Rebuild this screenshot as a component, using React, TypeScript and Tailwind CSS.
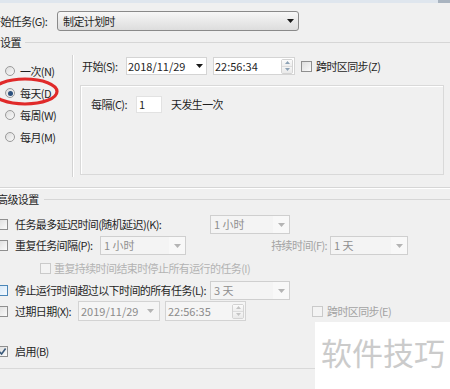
const txt = 'text-[11px] leading-none whitespace-nowrap text-[#1f1f1f] tracking-[-0.6px]'
const num = 'text-[11px] leading-none whitespace-nowrap text-[#1f1f1f]'
const dim = 'text-[11px] leading-none whitespace-nowrap text-[#a3a3a3] tracking-[-0.6px]'

function Arrow({ light }: { light?: boolean }) {
  return (
    <svg width="7" height="4" viewBox="0 0 7 4">
      <polygon points="0,0 7,0 3.5,4" fill={light ? '#b4b4b4' : '#1a1a1a'} />
    </svg>
  )
}

function Spin({ light }: { light?: boolean }) {
  const c = light ? '#c4c4c4' : '#8da2b5'
  return (
    <div className="ml-auto mr-[1px] flex h-[15px] w-[12px] flex-col rounded-[2px] border border-[#d3d3d3]">
      <div className="flex flex-1 items-center justify-center border-b border-[#dcdcdc] bg-gradient-to-b from-[#fbfbfb] to-[#eeeeee]">
        <svg width="5" height="3" viewBox="0 0 5 3"><polygon points="0,3 5,3 2.5,0" fill={c} /></svg>
      </div>
      <div className="flex flex-1 items-center justify-center bg-gradient-to-b from-[#f5f5f5] to-[#e9e9e9]">
        <svg width="5" height="3" viewBox="0 0 5 3"><polygon points="0,0 5,0 2.5,3" fill={c} /></svg>
      </div>
    </div>
  )
}

function Check({ kind = 'normal', checked }: { kind?: 'normal' | 'dim' | 'focus'; checked?: boolean }) {
  const box =
    kind === 'dim'
      ? 'border-[#cacaca] bg-[#f3f3f3]'
      : kind === 'focus'
        ? 'border-[#4a86b8] bg-gradient-to-br from-[#d6e8f8] to-[#f4f9fe]'
        : 'border-[#8f8f8f] bg-gradient-to-br from-[#dedede] to-[#fbfbfb]'
  return (
    <div className={`flex h-[11px] w-[11px] shrink-0 items-center justify-center border ${box}`}>
      {checked && (
        <svg width="9" height="9" viewBox="0 0 9 9">
          <path d="M1.5 4.8 L3.6 7 L7.6 1.5" stroke="#3b5a7a" strokeWidth="1.6" fill="none" />
        </svg>
      )}
    </div>
  )
}

function Radio({ on, label }: { on?: boolean; label: string }) {
  return (
    <div className="flex h-[22px] items-center">
      <div className="ml-[5px] flex h-[10px] w-[10px] items-center justify-center rounded-full border border-[#9a9a9a] bg-gradient-to-br from-[#dcdcdc] to-[#fafafa]">
        {on && <div className="h-[5px] w-[5px] rounded-full bg-[#2a4f7c]" />}
      </div>
      <span className={`${txt} ml-[5px]`}>{label}</span>
    </div>
  )
}

function Combo({ w, text, ml }: { w: string; text: string; ml?: string }) {
  return (
    <div className={`flex h-[19px] ${w} ${ml ?? ''} items-center border border-[#cfcfcf] bg-[#f4f4f4]`}>
      <span className="ml-[3px] text-[11px] leading-none whitespace-nowrap text-[#8f8f8f]">{text}</span>
      <div className="ml-auto flex h-full w-[16px] items-center justify-center bg-[#f8f8f8]">
        <Arrow light />
      </div>
    </div>
  )
}

export default function App() {
  return (
    <div className="relative h-[389px] w-[450px] overflow-hidden bg-[#f0f0f0] font-['Noto_Sans_CJK_SC',sans-serif]">
      <div className="flex h-[3px]">
        <div className="flex-1 bg-[#dfe6ee]" />
        <div className="w-[12px] bg-[#a9b4c0]" />
      </div>

      {/* start task */}
      <div className="mt-[8px] flex h-[20px] items-center">
        <span className={`${txt} ml-[-10px] w-[67px]`}>开始任务(G):</span>
        <div className="flex h-[20px] w-[242px] items-center rounded-[3px] border border-[#8a8a8a] bg-gradient-to-b from-[#f7f7f7] to-[#dddddd]">
          <span className={`${txt} ml-[5px]`}>制定计划时</span>
          <div className="ml-auto mr-[4px]"><Arrow /></div>
        </div>
      </div>

      {/* settings group */}
      <div className="mt-[5px] flex h-[12px] items-center">
        <span className={txt}>设置</span>
        <div className="ml-[4px] h-px flex-1 bg-[#d6d6d6]" />
      </div>

      <div className="flex h-[139px]">
        <div className="w-[72px] pt-[12px]">
          <Radio label="一次(N)" />
          <Radio on label="每天(D" />
          <Radio label="每周(W)" />
          <Radio label="每月(M)" />
        </div>
        <div className="mt-[7px] h-[122px] w-[2px] border-l border-r border-l-[#d3d3d3] border-r-white" />
        <div className="ml-[6px] flex flex-col">
          <div className="mt-[9px] flex h-[18px] items-center">
            <span className={`${txt} ml-[2px] w-[44px]`}>开始(S):</span>
            <div className="flex h-[18px] w-[81px] items-center border border-[#d4d4d4] bg-white">
              <span className={`${num} ml-[1px]`}>2018/11/29</span>
              <div className="ml-auto mr-[3px]"><Arrow /></div>
            </div>
            <div className="ml-[6px] flex h-[18px] w-[82px] items-center border border-[#d4d4d4] bg-white">
              <span className={`${num} ml-[1px]`}>22:56:34</span>
              <Spin />
            </div>
            <div className="ml-[6px]"><Check /></div>
            <span className={`${txt} ml-[4px]`}>跨时区同步(Z)</span>
          </div>
          <div className="mt-[10px] h-[90px] w-[364px] border border-[#d9d9d9] shadow-[inset_1px_1px_0_#ffffff]">
            <div className="mt-[10px] flex h-[17px] items-center">
              <span className={`${txt} ml-[10px] w-[45px]`}>每隔(C):</span>
              <div className="flex h-[17px] w-[26px] items-center border border-[#e2e2e2] bg-white">
                <span className={`${num} ml-[2px]`}>1</span>
              </div>
              <span className={`${txt} ml-[9px]`}>天发生一次</span>
            </div>
          </div>
        </div>
      </div>
      <div className="h-px bg-[#d6d6d6]" />
      <div className="h-px bg-white" />

      {/* advanced */}
      <div className="mt-[4px] flex h-[12px] items-center">
        <span className={`${txt} ml-[-3px]`}>高级设置</span>
        <div className="ml-[5px] h-px flex-1 bg-[#d6d6d6]" />
      </div>

      <div className="mt-[10px] flex h-[19px] items-center">
        <div className="ml-[-3px]"><Check /></div>
        <span className={`${txt} ml-[7px] w-[195px]`}>任务最多延迟时间(随机延迟)(K):</span>
        <Combo w="w-[80px]" text="1 小时" />
      </div>

      <div className="mt-[2px] flex h-[19px] items-center">
        <div className="ml-[-3px]"><Check /></div>
        <span className={`${txt} ml-[7px] w-[85px]`}>重复任务间隔(P):</span>
        <Combo w="w-[86px]" text="1 小时" />
        <span className={`${dim} w-[141px] text-right`}>持续时间(F):</span>
        <Combo w="w-[78px]" ml="ml-[3px]" text="1 天" />
      </div>

      <div className="mt-[6px] flex h-[14px] items-center">
        <div className="ml-[40px]"><Check kind="dim" /></div>
        <span className="ml-[3px] text-[11px] leading-none whitespace-nowrap text-[#b3b3b3] tracking-[-0.6px]">重复持续时间结束时停止所有运行的任务(I)</span>
      </div>

      <div className="mt-[6px] flex h-[19px] items-center">
        <div className="ml-[-3px]"><Check kind="focus" /></div>
        <span className={`${txt} ml-[7px] w-[195px]`}>停止运行时间超过以下时间的所有任务(L):</span>
        <Combo w="w-[80px]" text="3 天" />
      </div>

      <div className="mt-[1px] flex h-[20px] items-center">
        <div className="ml-[-3px]"><Check /></div>
        <span className={`${txt} ml-[7px] w-[63px]`}>过期日期(X):</span>
        <div className="flex h-[20px] w-[82px] items-center border border-[#d3d3d3] bg-[#f5f5f5]">
          <span className="ml-[2px] text-[11px] leading-none whitespace-nowrap text-[#8c8c8c]">2019/11/29</span>
          <div className="ml-auto mr-[5px]"><Arrow light /></div>
        </div>
        <div className="ml-[5px] flex h-[20px] w-[81px] items-center border border-[#d3d3d3] bg-[#f5f5f5]">
          <span className="ml-[2px] text-[11px] leading-none whitespace-nowrap text-[#8c8c8c]">22:56:35</span>
          <Spin light />
        </div>
        <div className="ml-[66px]"><Check kind="dim" /></div>
        <span className={`${dim} ml-[4px]`}>跨时区同步(E)</span>
      </div>

      <div className="mt-[23px] flex h-[14px] items-center">
        <div className="ml-[-3px]"><Check checked /></div>
        <span className={`${txt} ml-[7px]`}>启用(B)</span>
      </div>
      <div className="mt-[10px] h-px bg-[#d9d9d9]" />

      {/* annotation */}
      <svg className="absolute left-[-10px] top-[76px]" width="70" height="32" viewBox="0 0 70 32">
        <ellipse cx="35" cy="15.5" rx="32" ry="12.5" fill="none" stroke="#e02a2a" strokeWidth="3.2" />
      </svg>

      {/* watermark */}
      <div className="absolute left-[315px] top-[322px] h-[67px] w-[135px] bg-white">
        <div className="ml-[6px] mt-[14px] text-[31px] leading-[31px] whitespace-nowrap text-[#cbcbcb]">软件技巧</div>
      </div>
    </div>
  )
}
